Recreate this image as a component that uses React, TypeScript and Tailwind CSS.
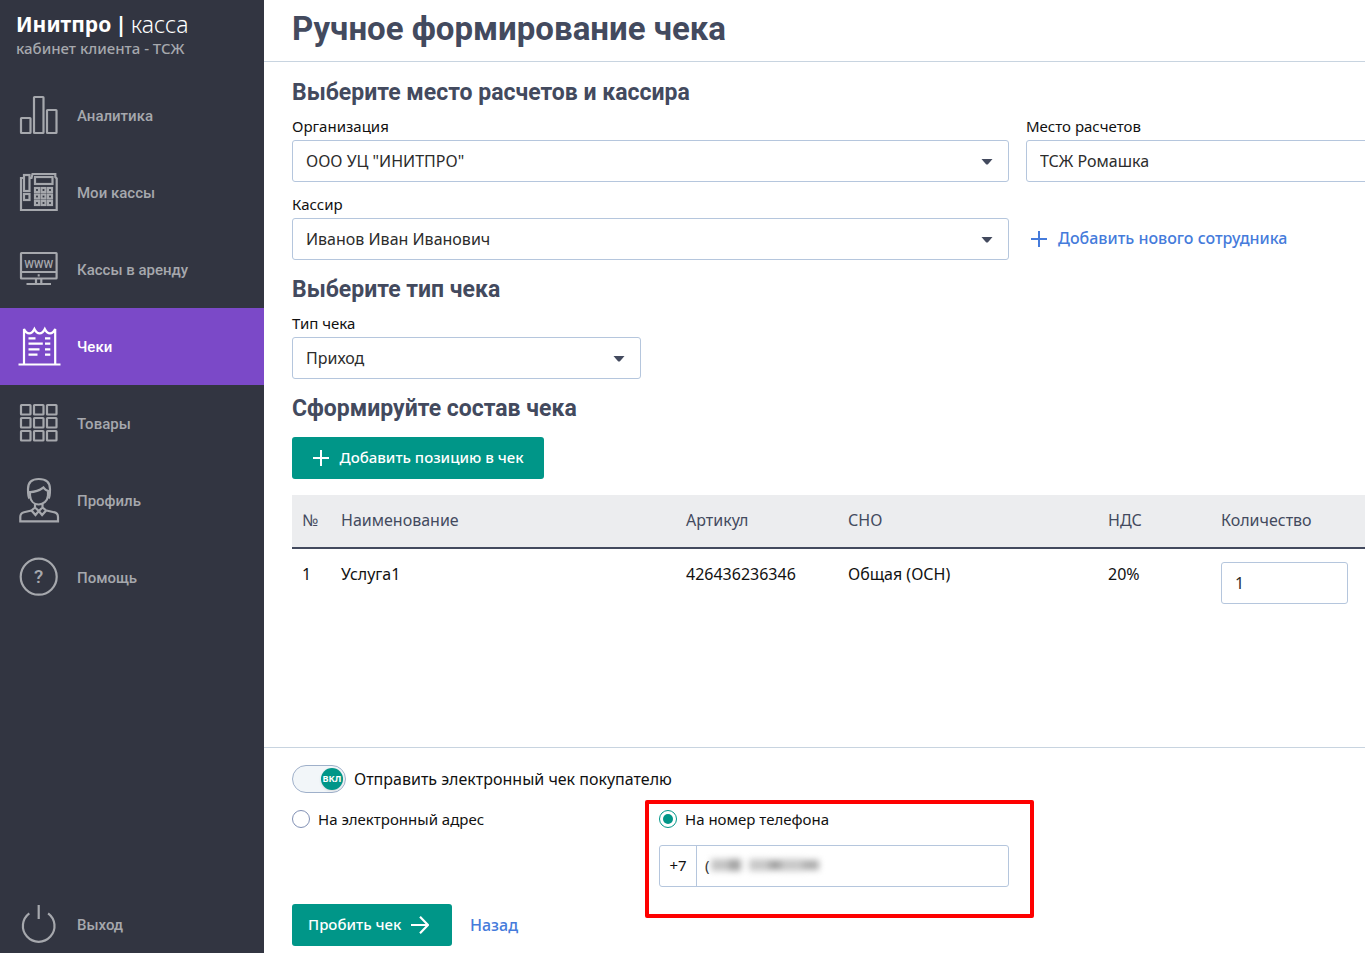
import { useState, type ReactNode } from 'react';
import clsx from 'clsx';

const squares = [2, 15, 28];
const keysX = [16, 22.5, 29];
const keysY = [19, 25.5, 32];

const menu: { title: string; active?: boolean; icon: ReactNode }[] = [
  {
    title: 'Аналитика',
    icon: (
      <>
        <rect x="2" y="26" width="9.5" height="15" rx="0.5" />
        <rect x="15" y="5" width="9.5" height="36" rx="0.5" />
        <rect x="28" y="18" width="9.5" height="23" rx="0.5" />
      </>
    ),
  },
  {
    title: 'Мои кассы',
    icon: (
      <>
        <path d="M4.5 9H2v32h35.7V9.5L36.3 8V5H13.5L12.5 9H11" />
        <rect x="5" y="6" width="5.5" height="16" />
        <rect x="5" y="25" width="5.5" height="6" />
        <rect x="16" y="8" width="17.5" height="7" />
        {keysY.map(y => keysX.map(x => <rect key={`${x}-${y}`} x={x} y={y} width="4" height="4" />))}
      </>
    ),
  },
  {
    title: 'Кассы в аренду',
    icon: (
      <>
        <rect x="2" y="7" width="35.6" height="25.5" rx="0.5" />
        <path d="M2 26h35.6M17 33v5M22.3 33v5M7.5 38h24.5M18.7 29.3h2" />
        <text x="19.7" y="21.5" textAnchor="middle" fontSize="11" fill="currentColor" stroke="none" className="font-['Roboto',sans-serif] font-medium">
          WWW
        </text>
      </>
    ),
  },
  {
    title: 'Чеки',
    active: true,
    icon: (
      <>
        <path d="M5 41V6q2 4.3 5.2 4.3T15.4 6q2 4.3 5.2 4.3T25.8 6q2 4.3 5.2 4.3T36.200 6v35" />
        <path d="M-.5 41.500h42M9.500 15.300h7M9.500 20.700h14.300M9.500 26.300h11M9.500 31.700h9M26 15.300h5.300M26 20.700h5.300M26 26.300h5.300M26 31.700h5.300" />
      </>
    ),
  },
  {
    title: 'Товары',
    icon: (
      <>{squares.map(y => squares.map(x => <rect key={`${x}-${y}`} x={x} y={y + 3} width="9.5" height="9.5" rx="0.5" />))}</>
    ),
  },
  {
    title: 'Профиль',
    icon: (
      <>
        <path d="M10.5 21.5C9 20 9 18 9 12 9 5 13 2 19.7 2S31 5 31 12c0 6 0 8-1.5 9.5" />
        <path d="M9.5 15C17 15.5 21 13 24.5 10.5c1.5 2.5 4 3.500 6 4" />
        <path d="M11 15v3.5C11.5 24 15 27.5 19.7 27.5S28.5 24 29 18.500V14.500" />
        <path d="M16 27v3.500M23.500 27v3.500M16 30.500l-3.500 3 4 4.500 3.300-4 3.300 4 4-4.500-3.500-3M16 30.500l3.800 3.500 3.700-3.500" />
        <path d="M12.500 33.500L5 35.200Q1.300 36 1.300 40v4.300H39V40q0-4-4-4.800l-7.500-1.700" />
      </>
    ),
  },
  {
    title: 'Помощь',
    icon: (
      <>
        <circle cx="19.7" cy="22.7" r="18" />
        <text x="19.7" y="29" textAnchor="middle" fontSize="19" fill="currentColor" stroke="none" className="font-['Roboto',sans-serif] font-medium">
          ?
        </text>
      </>
    ),
  },
];

function MenuIcon({ children }: { children: ReactNode }) {
  return (
    <svg width="40" height="47" viewBox="0 0 40 47" fill="none" stroke="currentColor" strokeWidth="2.2" className="shrink-0 overflow-visible" aria-hidden="true">
      {children}
    </svg>
  );
}

function Sidebar() {
  return (
    <aside className="w-[264px] shrink-0 bg-[#323541] text-[#a6a8ad] flex flex-col">
      <div className="h-[77px] px-4 pt-2">
        <div className="flex items-center gap-1 text-[21px] leading-8 text-white">
          <span className="font-bold">Инитпро</span>
          <span className="font-bold">|</span>
          <span className="font-light text-[23px]">касса</span>
        </div>
        <div className="text-[15px] leading-4 font-medium">кабинет клиента - ТСЖ</div>
      </div>
      <nav>
        {menu.map(item => (
          <a
            key={item.title}
            href="#"
            className={clsx(
              "h-[77px] pl-[19px] flex items-center gap-[18px] font-['Roboto',sans-serif] font-medium text-[15px]",
              item.active && 'bg-[#7b49c8] text-white',
            )}
          >
            <MenuIcon>{item.icon}</MenuIcon>
            <span className="pt-0.5">{item.title}</span>
          </a>
        ))}
      </nav>
      <a href="#" className="mt-auto h-14 pl-[19px] flex items-center gap-[18px] font-['Roboto',sans-serif] font-medium text-[15px]">
        <MenuIcon>
          <path d="M10.300 11.300a15.800 15.800 0 1 0 18.800 0M19.700 3v14" />
        </MenuIcon>
        Выход
      </a>
    </aside>
  );
}

function SelectField({ id, label, value, className }: { id: string; label: string; value: string; className?: string }) {
  return (
    <div className={className}>
      <label htmlFor={id} className="block pb-1 text-[15px] leading-5 text-[#111]">{label}</label>
      <div className="relative">
        <select id={id} className="block w-full h-[42px] pl-[13px] pr-10 pb-px appearance-none rounded-[3px] border border-[#b5c6dd] bg-white text-base text-[#2c2c2c]">
          <option>{value}</option>
        </select>
        <svg width="12" height="6" viewBox="0 0 12 6" fill="#434a5e" className="absolute right-4 top-[19px] pointer-events-none" aria-hidden="true">
          <path d="M0.500 0h11L7 5.200q-1 .8-2 0z" />
        </svg>
      </div>
    </div>
  );
}

function PlusIcon() {
  return (
    <svg width="16" height="16" viewBox="0 0 16 16" fill="none" stroke="currentColor" strokeWidth="2" aria-hidden="true">
      <path d="M8 0v16M0 8h16" />
    </svg>
  );
}

function SectionTitle({ children }: { children: ReactNode }) {
  return <h2 className="font-['Roboto',sans-serif] font-bold text-[23px] leading-8 text-[#434a5e]">{children}</h2>;
}

function Items() {
  return (
    <table className="mt-4 w-full table-fixed text-left text-base">
      <thead>
        <tr className="h-[53px] bg-[#ecedef] border-b-2 border-[#434a5e] text-[#434a5e]">
          <th className="w-[39px] px-2.5 pb-0.5 font-normal">№</th>
          <th className="w-[345px] px-2.5 pb-0.5 font-normal">Наименование</th>
          <th className="w-[162px] px-2.5 pb-0.5 font-normal">Артикул</th>
          <th className="w-[260px] px-2.5 pb-0.5 font-normal">СНО</th>
          <th className="w-[113px] px-2.5 pb-0.5 font-normal">НДС</th>
          <th className="px-2.5 pb-0.5 font-normal">Количество</th>
        </tr>
      </thead>
      <tbody>
        <tr className="align-top text-[#111]">
          <td className="px-2.5 pt-[13px]">1</td>
          <td className="px-2.5 pt-[13px]">Услуга1</td>
          <td className="px-2.5 pt-[13px]">426436236346</td>
          <td className="px-2.5 pt-[13px]">Общая (ОСН)</td>
          <td className="px-2.5 pt-[13px]">20%</td>
          <td className="px-2.5 pt-[13px]">
            <input aria-label="Количество" defaultValue="1" className="block w-[127px] h-[42px] px-[13px] rounded-[3px] border border-[#b5c6dd] text-[#2c2c2c]" />
          </td>
        </tr>
      </tbody>
    </table>
  );
}

const radioStyle =
  'appearance-none size-[18px] rounded-full border border-[#8291b5] bg-white grid place-items-center checked:border-[#009688] checked:before:size-2.5 checked:before:rounded-full checked:before:bg-[#009688]';

function SendForm() {
  const [send, setSend] = useState(true);
  const [target, setTarget] = useState('phone');

  return (
    <footer className="border-t border-[#c8d4e0] px-7 pt-[17px] pb-[7px]">
      <div className="flex items-center gap-2 h-7">
        <button
          type="button"
          role="switch"
          id="send"
          aria-checked={send}
          onClick={() => setSend(!send)}
          className={clsx('w-[54px] h-7 px-0.5 rounded-full border border-[#9fb0ca] bg-[#f2f6f9] flex items-center', send && 'justify-end')}
        >
          <span className="size-[22px] rounded-full bg-[#009688] text-white text-[9px] font-bold flex items-center justify-center shadow">
            {send ? 'ВКЛ' : ''}
          </span>
        </button>
        <label htmlFor="send" className="text-base text-[#111]">Отправить электронный чек покупателю</label>
      </div>

      <div className="grid grid-cols-2 gap-[17px] w-[717px] mt-4 text-[15px] text-[#111]">
        <label className="flex items-center gap-2 h-5">
          <input type="radio" name="target" checked={target === 'email'} onChange={() => setTarget('email')} className={radioStyle} />
          На электронный адрес
        </label>
        <div className="relative">
          <div className="absolute -top-[9px] -left-3.5 -right-[25px] -bottom-[31px] rounded-xs border-4 border-[#fe0000] pointer-events-none" />
          <label className="flex items-center gap-2 h-5">
            <input type="radio" name="target" checked={target === 'phone'} onChange={() => setTarget('phone')} className={radioStyle} />
            На номер телефона
          </label>
          <div className="relative mt-4 flex h-[42px] rounded-[3px] border border-[#b5c6dd]">
            <label htmlFor="phone" className="w-[37px] pb-0.5 flex items-center justify-center border-r border-[#b5c6dd]">+7</label>
            <input id="phone" type="tel" defaultValue="(" className="min-w-0 flex-1 px-2 pb-0.5 text-[#2c2c2c]" />
            {/* hidden digits */}
            <div className="absolute left-[51px] top-[13px] flex items-center gap-2 blur-[3px] pointer-events-none" aria-hidden="true">
              <span className="w-[18px] h-3 bg-[#c4c4c4]" />
              <span className="-ml-2 w-3 h-3 bg-[#a4a4a4]" />
              <span className="w-5 h-3 bg-[#c8c8c8]" />
              <span className="-ml-2 w-3 h-2.5 bg-[#a0a0a0]" />
              <span className="-ml-2 w-[22px] h-3 bg-[#c8c8c8]" />
              <span className="-ml-2 w-4 h-2.5 bg-[#adadad]" />
            </div>
          </div>
        </div>
      </div>

      <div className="mt-[17px] flex items-center">
        <button type="button" className="h-[42px] w-[160px] pl-4 rounded-[3px] bg-[#009688] text-white text-[15px] font-medium flex items-center gap-2.5">
          <span className="pb-0.5">Пробить чек</span>
          <svg width="18" height="18" viewBox="0 0 18 18" fill="none" stroke="currentColor" strokeWidth="2.2" aria-hidden="true">
            <path d="M0 9h17M9 0.800L17 9l-8 8.200" />
          </svg>
        </button>
        <a href="#" className="ml-[18px] text-base font-medium text-[#457bdb]">Назад</a>
      </div>
    </footer>
  );
}

export default function App() {
  return (
    <div className="flex min-h-screen bg-white font-['Noto_Sans',sans-serif]">
      <Sidebar />
      <main className="min-w-0 flex-1 flex flex-col overflow-hidden">
        <header className="h-[62px] border-b border-[#c8d4e0] px-7 pt-[9px]">
          <h1 className="font-['Roboto',sans-serif] font-bold text-[33px] leading-10 text-[#434a5e]">Ручное формирование чека</h1>
        </header>

        {/* the form is wider than a small window */}
        <div className="flex-1 min-w-[1507px] px-7 pt-[15px]">
          <SectionTitle>Выберите место расчетов и кассира</SectionTitle>
          <div className="mt-[7px] grid grid-cols-2 gap-x-[17px] gap-y-3">
            <SelectField id="org" label="Организация" value={'ООО УЦ "ИНИТПРО"'} />
            <SelectField id="place" label="Место расчетов" value="ТСЖ Ромашка" />
            <SelectField id="cashier" label="Кассир" value="Иванов Иван Иванович" />
            <button type="button" className="self-end justify-self-start h-[42px] pl-[5px] flex items-center gap-[11px] text-base font-medium text-[#457bdb]">
              <PlusIcon />
              <span className="pb-0.5">Добавить нового сотрудника</span>
            </button>
          </div>

          <div className="mt-3.5">
            <SectionTitle>Выберите тип чека</SectionTitle>
            <SelectField id="type" label="Тип чека" value="Приход" className="mt-[7px] w-[349px]" />
          </div>

          <div className="mt-3.5">
            <SectionTitle>Сформируйте состав чека</SectionTitle>
            <button type="button" className="mt-3 h-[42px] w-[252px] rounded-[3px] bg-[#009688] text-white text-[15px] font-medium flex items-center justify-center gap-[11px]">
              <PlusIcon />
              <span className="pb-0.5">Добавить позицию в чек</span>
            </button>
            <Items />
          </div>
        </div>

        <SendForm />
      </main>
    </div>
  );
}
